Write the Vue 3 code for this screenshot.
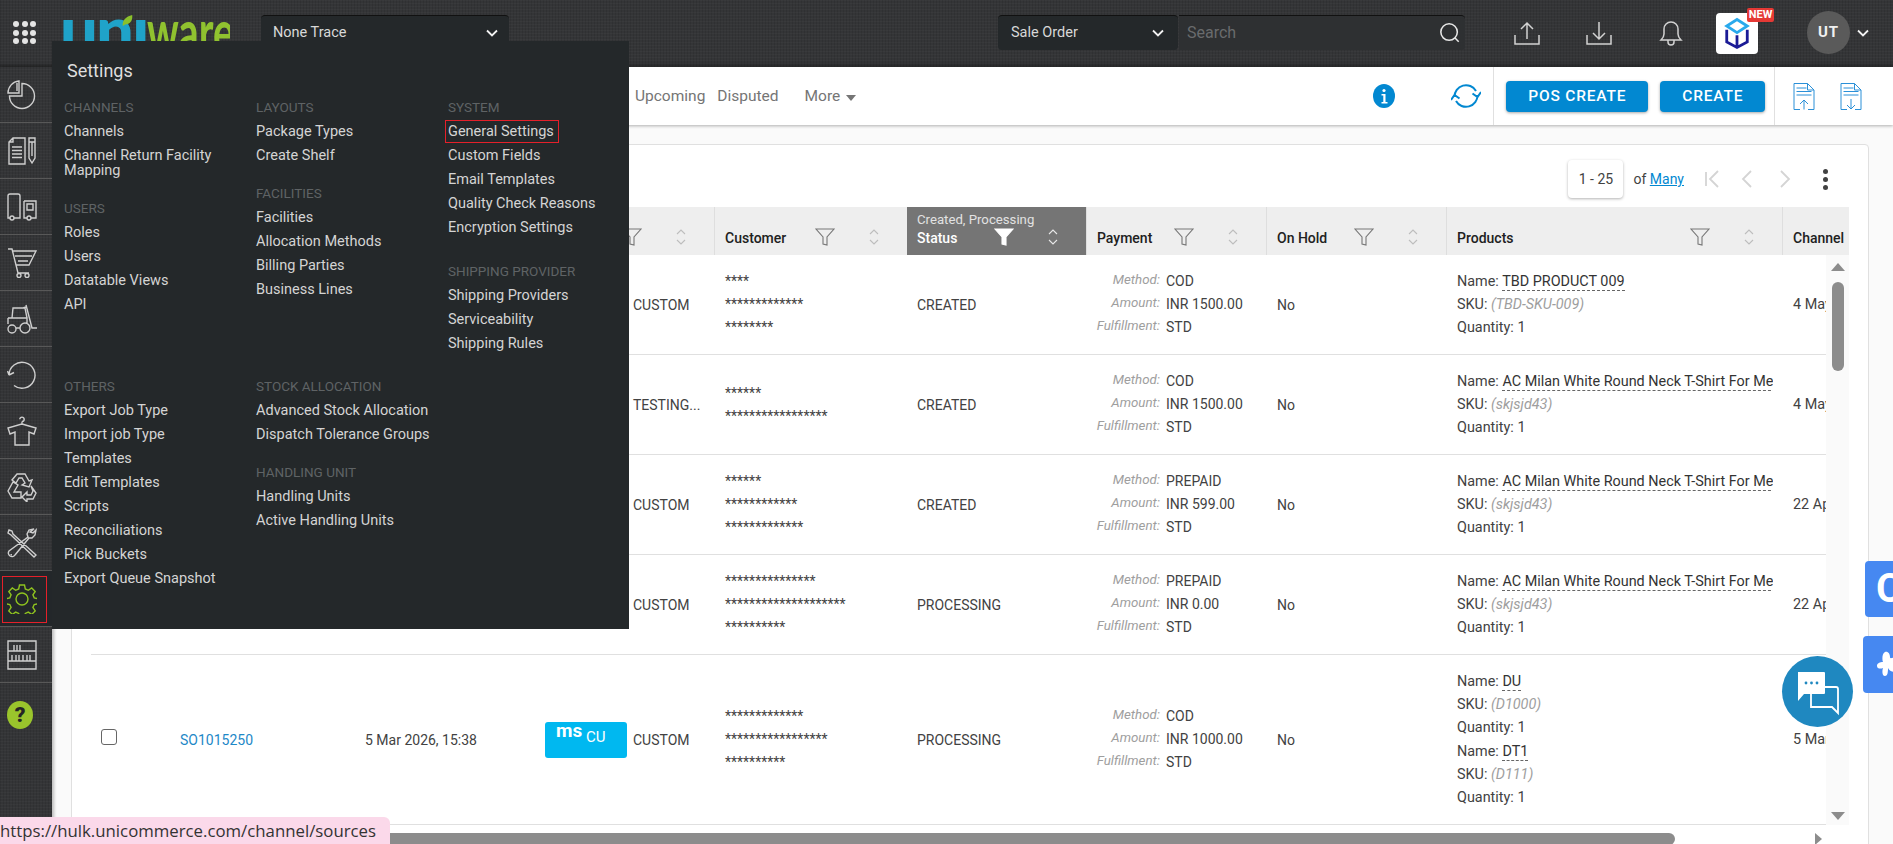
<template>
  <div class="app">
    <header class="topbar">
      <div class="grid-dots"><i v-for="n in 9" :key="n"></i></div>
      <div class="logo">
        <span class="logo-uni">unı</span><span class="logo-ware">ware</span>
        <svg class="logo-leaf" viewBox="0 0 14 16"><path d="M1 15C0 8 5 3 13 1c1 7-3 12-9 12z" fill="#8bc02c"/></svg>
      </div>
      <div class="select select--trace">
        <span>None Trace</span>
        <svg class="chev" viewBox="0 0 12 8"><path d="M1 1.500l5 5 5-5" /></svg>
      </div>
      <div class="search-group">
        <div class="select select--type">
          <span>Sale Order</span>
          <svg class="chev" viewBox="0 0 12 8"><path d="M1 1.500l5 5 5-5" /></svg>
        </div>
        <div class="search">
          <span>Search</span>
          <svg viewBox="0 0 24 24"><circle cx="11" cy="11" r="9"/><path d="M17.500 17.500l4 4"/></svg>
        </div>
      </div>
      <svg class="top-icon top-icon--up" viewBox="0 0 26 24"><path d="M1 14v9h24v-9M13 18V2M7 8l6-6 6 6"/></svg>
      <svg class="top-icon top-icon--down" viewBox="0 0 26 24"><path d="M1 14v9h24v-9M13 1v17M7 12l6 6 6-6"/></svg>
      <svg class="top-icon top-icon--bell" viewBox="0 0 24 26"><path d="M2 20c2-2 3-3 3-6V9a7 7 0 0 1 14 0v5c0 3 1 4 3 6zM9 20v2a3 3 0 0 0 6 0v-2"/></svg>
      <div class="new-app">
        <svg viewBox="0 0 30 34">
          <path d="M15 2L4 9l11 7 11-7z" fill="none" stroke="#29a9ec" stroke-width="3"/>
          <path d="M4 13v13l11 6 11-6V13M15 19v13" fill="none" stroke="#1b1b96" stroke-width="3"/>
        </svg>
        <span class="new-badge">NEW</span>
      </div>
      <div class="avatar">UT</div>
      <svg class="chev chev--user" viewBox="0 0 12 8"><path d="M1 1.500l5 5 5-5" /></svg>
    </header>

    <div class="main">
      <nav class="sidebar">
        <div v-for="item in navItems" :key="item.name" class="nav-cell" :class="{ 'nav-cell--active': item.active }">
          <svg class="nav-icon" viewBox="0 0 30 30"><path :d="item.d"/></svg>
        </div>
        <div class="nav-cell nav-cell--help">
          <span class="help">?</span>
        </div>
      </nav>

      <div class="content">
        <div class="toolbar">
          <span class="tab">Upcoming</span>
          <span class="tab">Disputed</span>
          <span class="tab tab--more">More<i class="caret"></i></span>
          <svg class="info" viewBox="0 0 22 24"><ellipse cx="11" cy="12" rx="11" ry="12" fill="#0288d1"/><circle cx="11" cy="6.500" r="1.600" fill="#fff"/><path d="M8.500 10h4v8h2v1.500h-6V18h1.800v-6.500H8.500z" fill="#fff"/></svg>
          <svg class="refresh" viewBox="0 0 30 28"><path d="M3.500 15A11.500 11.500 0 0 1 25 9M26.500 13A11.500 11.500 0 0 1 5 19M21.500 11.500l5 3.500 3.500-5M8.500 16.500l-5-3.500L0 18"/></svg>
          <div class="toolbar-actions">
            <button class="btn btn--pos">POS CREATE</button>
            <button class="btn btn--create">CREATE</button>
          </div>
          <div class="toolbar-docs">
            <svg class="doc-icon" viewBox="0 0 22 27"><path d="M7 26.500H1V.500h13.500L21 7v19.500h-6M14.500.500V7H21M3.500 5h10M3.500 8.500h15M3.500 12h15M11 26.500V17M7 21l4-4 4 4"/></svg>
            <svg class="doc-icon" viewBox="0 0 22 27"><path d="M7 26.500H1V.500h13.500L21 7v19.500h-6M14.500.500V7H21M3.500 5h10M3.500 8.500h15M3.500 12h15M11 16v10M7 22l4 4 4-4"/></svg>
          </div>
        </div>

        <section class="card">
          <div class="pager">
            <span class="pager-range">1 - 25</span>
            <span class="pager-of">of <a>Many</a></span>
            <svg class="pager-icon" viewBox="0 0 16 20"><path d="M2 3v14M14 2l-8 8 8 8"/></svg>
            <svg class="pager-icon" viewBox="0 0 16 20"><path d="M11 2l-8 8 8 8"/></svg>
            <svg class="pager-icon" viewBox="0 0 16 20"><path d="M5 2l8 8-8 8"/></svg>
            <span class="kebab"><i></i><i></i><i></i></span>
          </div>

          <div class="thead">
            <div class="th" style="width: 80px"></div>
            <div class="th" style="width: 184px"></div>
            <div class="th" style="width: 179px"></div>
            <div v-for="(col, i) in columns" :key="i" class="th th--label" :class="{ 'th--active': col.active }" :style="{ width: col.width + 'px' }">
              <div class="th-text">
                <small v-if="col.active">Created, Processing</small>
                <span>{{ col.label }}</span>
              </div>
              <svg class="filter" viewBox="0 0 20 18"><path d="M1 1h18l-7 8v8l-4-1V9z"/></svg>
              <svg class="sort" viewBox="0 0 10 18"><path d="M1 6l4-4 4 4M1 12l4 4 4-4"/></svg>
            </div>
            <div class="th th--label th--last"><div class="th-text"><span>Channel</span></div></div>
          </div>

          <div class="tbody-wrap">
            <div class="tbody">
              <div v-for="row in rows" :key="row.id" class="tr" :style="{ height: row.height + 'px' }">
                <div class="td td--check"><span v-if="row.code" class="checkbox"></span></div>
                <div class="td td--code"><a v-if="row.code">{{ row.code }}</a></div>
                <div class="td td--date">{{ row.created }}</div>
                <div class="td td--channel">
                  <span v-if="row.code" class="ms-logo"><b>ms</b><em>CU</em></span>
                  <span class="channel-name">{{ row.channel }}</span>
                </div>
                <div class="td td--customer">
                  <div v-for="(line, i) in row.customer" :key="i">{{ line }}</div>
                </div>
                <div class="td td--status">{{ row.status }}</div>
                <div class="td td--payment">
                  <div class="pay"><label>Method:</label><span>{{ row.method }}</span></div>
                  <div class="pay"><label>Amount:</label><span>{{ row.amount }}</span></div>
                  <div class="pay"><label>Fulfillment:</label><span>{{ row.fulfillment }}</span></div>
                </div>
                <div class="td td--hold">No</div>
                <div class="td td--products">
                  <div v-for="p in row.products" :key="p.sku" class="product">
                    <div class="product-name">Name: <span>{{ p.name }}</span></div>
                    <div>SKU: <em>({{ p.sku }})</em></div>
                    <div>Quantity: 1</div>
                  </div>
                </div>
                <div class="td td--last">{{ row.channelDate }}</div>
              </div>
            </div>
            <div class="vscroll">
              <i class="arrow arrow--up"></i>
              <div class="vthumb"></div>
              <i class="arrow arrow--down"></i>
            </div>
          </div>
          <div class="hscroll">
            <div class="hthumb"></div>
            <i class="arrow arrow--right"></i>
          </div>
        </section>
      </div>
    </div>

    <!-- settings flyout -->
    <div class="flyout">
      <h2>Settings</h2>
      <div class="flyout-grid">
        <div v-for="(col, c) in menu" :key="c" class="flyout-col">
          <div v-for="group in col" :key="group.title" class="group" :class="{ 'group--loose': group.loose }">
            <h3>{{ group.title }}</h3>
            <a v-for="link in group.links" :key="link" class="link" :class="{ 'link--active': link === 'General Settings' }">{{ link }}</a>
          </div>
        </div>
      </div>
    </div>

    <div class="side-tab side-tab--one"><span>C</span></div>
    <div class="side-tab side-tab--two">
      <svg viewBox="0 0 24 27"><path d="M9 1c3-1 5 2 5 5s4-1 6 1 1 5-2 6c3 1 4 5 1 7s-6-1-7-3c0 3 0 8-3 8s-3-5-2-8c-2 1-6 1-6-2s3-4 6-4C6 9 6 2 9 1z" fill="#fff"/></svg>
    </div>
    <div class="chat">
      <svg viewBox="0 0 44 46">
        <path d="M15 22v15h21l6 6V19a2 2 0 0 0-2-2H22" fill="none" stroke="#fff" stroke-width="1.800"/>
        <path d="M2 2h26a1 1 0 0 1 1 1v20a1 1 0 0 1-1 1H8l-6 7z" fill="#fff"/>
        <g fill="#1f88c0"><circle cx="10" cy="13" r="1.400"/><circle cx="15.500" cy="13" r="1.400"/><circle cx="21" cy="13" r="1.400"/></g>
      </svg>
    </div>
    <div class="status-url">https://hulk.unicommerce.com/channel/sources</div>
  </div>
</template>

<script setup>
const navItems = [
  { name: 'dashboard', d: 'M15 3.500V16H2.500A12.500 12.500 0 1 0 15 3.500zM12 1v12H1A12 12 0 0 1 12 1zM10 3v8' },
  { name: 'orders', d: 'M6 2h12v26H2V6zM6 2v4H2M5 11h10M5 14.500h10M5 18h10M5 21.500h10M22 2h6v20l-3 5-3-5zM22 6h6M25 6v14' },
  { name: 'shipping', d: 'M3 2h8a2 2 0 0 1 2 2v22H7M3 26H1V4a2 2 0 0 1 2-2M3 26a2 2 0 1 0 4 0 2 2 0 1 0-4 0M17 9h12v17h-5M20 26h-3V9M20 26a2 2 0 1 0 4 0 2 2 0 1 0-4 0M20 12h6v6h-6z' },
  { name: 'cart', d: 'M1 1h4l6 24M5.500 3H29l-7 14H9M8 8h17M11 13h10M10 27.500a2 2 0 1 0 4 0 2 2 0 1 0-4 0M18 27.500a2 2 0 1 0 4 0 2 2 0 1 0-4 0M11 25h11' },
  { name: 'forklift', d: 'M5 14l1-10h12l2 10M1 14h19v6M1 14v6M19 1l6 23h5M16 4l3-1M1 25a4 4 0 1 0 8 0 4 4 0 1 0-8 0M13 24a5 5 0 1 0 10 0 5 5 0 1 0-10 0M9 24h4' },
  { name: 'returns', d: 'M2 15A13 13 0 1 1 7 25.500M2 15l-1.500-4M2 15l5-2.500' },
  { name: 'products', d: 'M15 5.500a2.200 2.200 0 1 0-2.200-2.200M15 5.500V8L1 12l2 6 5-2v13h14V16l5 2 2-6-14-4' },
  { name: 'recycle', d: 'M10 2h8l4 7 3-1-3 7-7-2 3-2-3-5h-3l-3 5-4-3zM1 19l5-9 5 3-4 7h7v6H5zM24 14l5 7-3 6h-6v3l-5-5 5-5v3h4l2-4z' },
  { name: 'tools', d: 'M2 2l3 1 1 3 23 21-2 2L4 7 1 5zM27 1l-5 1-2 4 1 3L2 23a3.500 3.500 0 0 0 1 5 3.500 3.500 0 0 0 5-1l14-17h3l3-3 1-5-3 3-3-1zM4 26a1 1 0 0 0 1 1' },
  { name: 'settings', active: true, d: 'M12.500 1h5l.8 4 3 1.300 3.400-2.300 3.500 3.500-2.300 3.400 1.300 3 4 .8v5l-4 .8-1.300 3 2.300 3.400-3.500 3.500-3.400-2.300-3 1.300-.8 4h-5l-.8-4-3-1.300-3.400 2.300-3.500-3.500 2.300-3.400-1.300-3-4-.8v-5l4-.8 1.300-3-2.300-3.400 3.500-3.500 3.400 2.300 3-1.300zM15 9a6 6 0 1 0 0 12 6 6 0 1 0 0-12z' },
  { name: 'shelves', d: 'M1 1h28v28H1zM1 11h28M1 21h28M7 5v6M10 5v6M13 5v6M5 15v6M9 15v6M12 15v6M16 15v6M20 15v6M23 15v6' }
]

const columns = [
  { label: '', width: 180 },
  { label: 'Customer', width: 193 },
  { label: 'Status', width: 179, active: true },
  { label: 'Payment', width: 180 },
  { label: 'On Hold', width: 180 },
  { label: 'Products', width: 336 }
]

const acMilan = { name: 'AC Milan White Round Neck T-Shirt For Men', sku: 'skjsjd43' }

const rows = [
  {
    id: 1, height: 100, channel: 'CUSTOM', status: 'CREATED',
    customer: ['****', '*************', '********'],
    method: 'COD', amount: 'INR 1500.00', fulfillment: 'STD',
    products: [{ name: 'TBD PRODUCT 009', sku: 'TBD-SKU-009' }], channelDate: '4 May 2026'
  },
  {
    id: 2, height: 100, channel: 'TESTING...', status: 'CREATED',
    customer: ['******', '*****************'],
    method: 'COD', amount: 'INR 1500.00', fulfillment: 'STD',
    products: [acMilan], channelDate: '4 May 2026'
  },
  {
    id: 3, height: 100, channel: 'CUSTOM', status: 'CREATED',
    customer: ['******', '************', '*************'],
    method: 'PREPAID', amount: 'INR 599.00', fulfillment: 'STD',
    products: [acMilan], channelDate: '22 Apr 2026'
  },
  {
    id: 4, height: 100, channel: 'CUSTOM', status: 'PROCESSING',
    customer: ['***************', '********************', '**********'],
    method: 'PREPAID', amount: 'INR 0.00', fulfillment: 'STD',
    products: [acMilan], channelDate: '22 Apr 2026'
  },
  {
    id: 5, height: 170, code: 'SO1015250', created: '5 Mar 2026, 15:38', channel: 'CUSTOM', status: 'PROCESSING',
    customer: ['*************', '*****************', '**********'],
    method: 'COD', amount: 'INR 1000.00', fulfillment: 'STD',
    products: [{ name: 'DU', sku: 'D1000' }, { name: 'DT1', sku: 'D111' }], channelDate: '5 Mar 2026'
  }
]

const menu = [
  [
    { title: 'CHANNELS', links: ['Channels', 'Channel Return Facility Mapping'] },
    { title: 'USERS', links: ['Roles', 'Users', 'Datatable Views', 'API'] }
  ],
  [
    { title: 'LAYOUTS', links: ['Package Types', 'Create Shelf'] },
    { title: 'FACILITIES', links: ['Facilities', 'Allocation Methods', 'Billing Parties', 'Business Lines'] }
  ],
  [
    { title: 'SYSTEM', links: ['General Settings', 'Custom Fields', 'Email Templates', 'Quality Check Reasons', 'Encryption Settings'] },
    { title: 'SHIPPING PROVIDER', loose: true, links: ['Shipping Providers', 'Serviceability', 'Shipping Rules'] }
  ],
  [
    { title: 'OTHERS', links: ['Export Job Type', 'Import job Type', 'Templates', 'Edit Templates', 'Scripts', 'Reconciliations', 'Pick Buckets', 'Export Queue Snapshot'] }
  ],
  [
    { title: 'STOCK ALLOCATION', links: ['Advanced Stock Allocation', 'Dispatch Tolerance Groups'] },
    { title: 'HANDLING UNIT', links: ['Handling Units', 'Active Handling Units'] }
  ]
]
</script>

<style>
html, body {
  margin: 0;
  overflow: hidden;
}
</style>

<style scoped>
.app {
  position: relative;
  display: flex;
  flex-direction: column;
  width: 1893px;
  height: 844px;
  overflow: hidden;
  font-family: Roboto, "Liberation Sans", sans-serif;
  font-size: 14px;
  color: #424242;
  background: #fafafa;
}

/* dark woven texture shared by the top bar and the side rail */
.topbar,
.sidebar {
  background-color: #343537;
  background-image:
    repeating-linear-gradient(0deg, rgba(255, 255, 255, 0.025) 0 1px, transparent 1px 3px),
    repeating-linear-gradient(90deg, rgba(0, 0, 0, 0.09) 0 1px, transparent 1px 3px);
}

.topbar {
  position: relative;
  flex: 0 0 67px;
  display: flex;
  align-items: flex-start;
  box-shadow: inset 0 -5px 5px -4px rgba(0, 0, 0, 0.45);
}

.grid-dots {
  display: grid;
  grid-template-columns: repeat(3, 6px);
  gap: 2.500px;
  margin: 21px 0 0 13px;
}
.grid-dots i {
  width: 6px;
  height: 6px;
  border-radius: 50%;
  background: #e4e4e4;
}

.logo {
  position: relative;
  flex: none;
  width: 170px;
  margin: 0 31px 0 24px;
  height: 60px;
  line-height: 56px;
  font-family: Lato, "Open Sans", sans-serif;
  white-space: nowrap;
  overflow: hidden;
}
.logo-uni {
  color: #1fa3c9;
  font-size: 67px;
  font-weight: 900;
  letter-spacing: -2px;
}
.logo-ware {
  display: inline-block;
  color: #90c22f;
  font-size: 62px;
  font-weight: 700;
  transform: scaleX(0.64);
  transform-origin: left center;
}
.logo-leaf {
  position: absolute;
  left: 62px;
  top: 14px;
  width: 11px;
  height: 13px;
}

.select {
  display: flex;
  align-items: center;
  justify-content: space-between;
  height: 35px;
  box-sizing: border-box;
  margin-top: 15px;
  background: #24282a;
  border-top: 1px solid #111;
  border-radius: 4px;
  color: #d8d8d8;
  font-size: 14.500px;
}
.select--trace {
  width: 248px;
  padding: 0 11px 1px 12px;
}
.select--type {
  width: 180px;
  margin: 0;
  padding: 0 14px 1px 13px;
}
.chev {
  width: 12px;
  height: 8px;
  fill: none;
  stroke: #f2f2f2;
  stroke-width: 1.800;
}

.search-group {
  display: flex;
  margin: 15px 0 0 489px;
}
.search {
  display: flex;
  align-items: center;
  justify-content: space-between;
  width: 286px;
  height: 35px;
  margin-left: 1px;
  padding: 0 4px 1px 8px;
  box-sizing: border-box;
  background: #2e3032;
  border-top: 1px solid #111;
  border-radius: 0 4px 4px 0;
  color: #696b6d;
  font-size: 16px;
}
.search svg {
  width: 22px;
  height: 22px;
  fill: none;
  stroke: #e6e6e6;
  stroke-width: 1.700;
}

.top-icon {
  fill: none;
  stroke: #d2d2d2;
  stroke-width: 1.500;
  margin-top: 21px;
}
.top-icon--up,
.top-icon--down {
  width: 26px;
  height: 24px;
}
.top-icon--up {
  margin-left: 49px;
}
.top-icon--down {
  margin-left: 46px;
}
.top-icon--bell {
  width: 24px;
  height: 26px;
  margin-top: 20px;
  margin-left: 47px;
}

.new-app {
  position: relative;
  display: flex;
  align-items: center;
  justify-content: center;
  width: 42px;
  height: 41px;
  margin: 13px 0 0 33px;
  background: #fff;
  border-radius: 4px;
}
.new-app svg {
  width: 28px;
  height: 33px;
}
.new-badge {
  position: absolute;
  top: -5px;
  left: 31px;
  width: 27px;
  height: 14px;
  background: #e53935;
  border-radius: 2px;
  color: #fff;
  font-size: 11px;
  font-weight: 700;
  line-height: 14px;
  text-align: center;
}

.avatar {
  width: 43px;
  height: 43px;
  margin: 11px 0 0 49px;
  border-radius: 50%;
  background: #5a5a5a;
  color: #f0f0f0;
  font-size: 15px;
  font-weight: 700;
  letter-spacing: 1px;
  line-height: 43px;
  text-align: center;
}
.chev--user {
  margin: 29px 0 0 7px;
}

.main {
  flex: 1;
  display: flex;
  min-height: 0;
}

.sidebar {
  flex: 0 0 52px;
  box-shadow: 2px 0 3px rgba(0, 0, 0, 0.25);
  z-index: 1;
}
.nav-cell {
  position: relative;
  display: flex;
  align-items: center;
  height: 56px;
  box-sizing: border-box;
  padding: 0 0 0 7px;
  border-bottom: 1px solid #585858;
}
.nav-cell--help {
  border-bottom: 0;
}
.nav-icon {
  width: 30px;
  height: 30px;
  fill: none;
  stroke: #cfcfcf;
  stroke-width: 1.400;
}
.nav-cell--active {
  background: #23272a;
}
.nav-cell--active::after {
  content: "";
  position: absolute;
  top: 5px;
  left: 2px;
  width: 45px;
  height: 47px;
  box-sizing: border-box;
  border: 1px solid #e5202a;
}
.nav-cell--active .nav-icon {
  stroke: #8fc31f;
}
.help {
  width: 26px;
  height: 28px;
  border-radius: 50%;
  margin-top: 8px;
  background: #9ac52c;
  color: #252525;
  font-size: 21px;
  font-weight: 900;
  line-height: 28px;
  text-align: center;
}

.content {
  flex: 1;
  min-width: 0;
}

.toolbar {
  display: flex;
  align-items: center;
  height: 58px;
  box-sizing: border-box;
  padding-left: 583px;
  background: #fff;
  box-shadow: 0 1px 3px rgba(0, 0, 0, 0.3);
  color: #757575;
  font-size: 15.500px;
}
.tab {
  margin-right: 12px;
}
.tab--more {
  display: flex;
  align-items: center;
  margin-left: 14px;
}
.caret {
  margin: 3px 0 0 6px;
  border: 5px solid transparent;
  border-top: 6px solid #757575;
  border-bottom: 0;
}
.info {
  width: 22px;
  height: 24px;
  margin-left: 505px;
}
.refresh {
  width: 30px;
  height: 28px;
  margin-left: 56px;
  fill: none;
  stroke: #0288d1;
  stroke-width: 2;
}
.toolbar-actions {
  display: flex;
  align-self: stretch;
  align-items: center;
  gap: 12px;
  margin-left: 12px;
  padding: 0 9px 0 12px;
  border-left: 1px solid #e0e0e0;
  border-right: 1px solid #e0e0e0;
}
.btn {
  height: 31px;
  padding: 0;
  border: 0;
  border-radius: 4px;
  background: #0288d1;
  box-shadow: 0 1px 3px rgba(0, 0, 0, 0.35);
  color: #fff;
  font-family: inherit;
  font-size: 15.500px;
  font-weight: 500;
  letter-spacing: 0.800px;
}
.btn--pos {
  width: 142px;
}
.btn--create {
  width: 105px;
}
.toolbar-docs {
  display: flex;
  gap: 25px;
  padding-left: 18px;
}
.doc-icon {
  width: 22px;
  height: 27px;
  fill: none;
  stroke: #2a90d8;
  stroke-width: 1;
}

.card {
  height: 720px;
  box-sizing: border-box;
  margin: 19px 24px 0 19px;
  padding: 0 19px;
  background: #fff;
  border: 1px solid #e0e0e0;
  border-radius: 4px;
}

.pager {
  display: flex;
  align-items: center;
  justify-content: flex-end;
  height: 62px;
  padding: 6px 20px 0 0;
  box-sizing: border-box;
}
.pager-range {
  width: 55px;
  height: 38px;
  background: #fff;
  border-radius: 4px;
  box-shadow: 0 1px 3px rgba(0, 0, 0, 0.3);
  color: #424242;
  line-height: 38px;
  text-align: center;
}
.pager-of {
  margin: 0 20px 0 10px;
  color: #424242;
}
.pager-of a {
  color: #0288d1;
  text-decoration: underline;
}
.pager-icon {
  width: 16px;
  height: 20px;
  margin-right: 20px;
  fill: none;
  stroke: #d4d4d4;
  stroke-width: 1.800;
}
.kebab {
  display: flex;
  flex-direction: column;
  gap: 3px;
  width: 6px;
  margin-left: 11px;
}
.kebab i {
  width: 5px;
  height: 5px;
  border-radius: 50%;
  background: #424242;
}

.thead {
  display: flex;
  height: 48px;
  width: 1758px;
  overflow: hidden;
  background: #eee;
}
.th {
  flex: none;
  box-sizing: border-box;
}
.th--label {
  display: flex;
  align-items: flex-end;
  padding: 0 28px 9px 10px;
  border-left: 1px solid #dedede;
  color: #212121;
  font-weight: 500;
  white-space: nowrap;
}
.th-text {
  flex: 1;
  min-width: 0;
  display: flex;
  flex-direction: column;
}
.th-text small {
  margin-bottom: 3px;
  color: #e2e2e2;
  font-size: 13.200px;
  font-weight: 400;
}
.filter {
  flex: none;
  width: 20px;
  height: 18px;
  fill: none;
  stroke: #777;
  stroke-width: 1.100;
}
.sort {
  flex: none;
  width: 10px;
  height: 18px;
  margin-left: 34px;
  fill: none;
  stroke: #bdbdbd;
  stroke-width: 1.100;
}
.th--active {
  background: #757575;
  color: #fff;
  border-left: 0;
}
.th--active .filter {
  fill: #fff;
  stroke: #fff;
}
.th--active .sort {
  stroke: #e8e8e8;
}
.th--last {
  flex: 1;
  padding-right: 0;
}

.tbody-wrap {
  display: flex;
  height: 570px;
}
.tbody {
  flex: 1;
  min-width: 0;
  overflow: hidden;
}
.tr {
  display: flex;
  align-items: center;
  box-sizing: border-box;
  width: 1900px;
  border-bottom: 1px solid #e0e0e0;
}
.td {
  flex: none;
  box-sizing: border-box;
  padding-left: 11px;
}
.td--check {
  width: 80px;
  padding-left: 10px;
}
.checkbox {
  display: block;
  width: 16px;
  height: 16px;
  margin-top: -6px;
  box-sizing: border-box;
  border: 1px solid #666;
  border-radius: 3px;
}
.td--code {
  width: 184px;
  padding-left: 9px;
}
.td--code a {
  color: #1e88c7;
}
.td--date {
  width: 179px;
  padding-left: 10px;
}
.td--channel {
  display: flex;
  align-items: center;
  width: 180px;
  padding-left: 0;
}
.ms-logo {
  position: relative;
  width: 82px;
  height: 36px;
  margin-left: 11px;
  margin-right: 6px;
  background: #00b8f0;
  border-radius: 3px;
  color: #fff;
}
.ms-logo b {
  position: absolute;
  left: 11px;
  top: -1px;
  font-size: 19px;
  line-height: 20px;
}
.ms-logo em {
  position: absolute;
  left: 41px;
  top: 6px;
  font-size: 15px;
  font-style: normal;
  line-height: 18px;
}
.channel-name {
  margin-left: 99px;
}
.ms-logo + .channel-name {
  margin-left: 0;
}
.td--customer {
  width: 193px;
  line-height: 23px;
}
.td--status {
  width: 179px;
  padding-left: 10px;
}
.td--payment {
  width: 180px;
  padding-left: 10px;
  line-height: 23px;
}
.pay {
  display: flex;
  gap: 6px;
}
.pay label {
  flex: none;
  width: 64px;
  margin-top: -2px;
  color: #9e9e9e;
  font-size: 13.300px;
  font-style: italic;
  text-align: right;
  white-space: nowrap;
}
.td--hold {
  width: 180px;
}
.td--products {
  width: 327px;
  margin-right: 9px;
  font-size: 14.400px;
  line-height: 23px;
  white-space: nowrap;
  overflow: hidden;
}
.product + .product {
  margin-top: 1px;
}
.product-name span {
  border-bottom: 1px dashed #666;
  color: #333;
}
.td--products em {
  color: #9e9e9e;
}
.td--last {
  font-size: 14.400px;
  white-space: nowrap;
}

.vscroll {
  flex: 0 0 23px;
  display: flex;
  flex-direction: column;
  align-items: center;
  box-sizing: border-box;
  padding: 8px 0 5px;
  background: #fafafa;
}
.vthumb {
  width: 12px;
  height: 89px;
  margin-top: 11px;
  background: #8c8c8c;
  border-radius: 6px;
}
.arrow {
  display: block;
  border: 7px solid transparent;
  border-top: 0;
  border-bottom: 8px solid #8c8c8c;
}
.arrow--down {
  margin-top: auto;
  border-bottom: 0;
  border-top: 8px solid #8c8c8c;
}
.arrow--right {
  border: 6px solid transparent;
  border-right: 0;
  border-left: 7px solid #8c8c8c;
  margin-left: 140px;
}

.hscroll {
  display: flex;
  align-items: center;
  height: 11px;
  margin-top: 8px;
}
.hthumb {
  width: 1584px;
  height: 12px;
  background: #8c8c8c;
  border-radius: 6px;
}

/* settings flyout sits over the page */
.flyout {
  position: absolute;
  top: 41px;
  left: 52px;
  width: 577px;
  height: 588px;
  box-sizing: border-box;
  padding: 0 0 0 12px;
  background: #24282a;
  color: #d4d4d4;
  z-index: 5;
}
.flyout h2 {
  margin: 0 0 13px 3px;
  padding-top: 18px;
  font-size: 18px;
  font-weight: 400;
  line-height: 24px;
  color: #dedede;
}
.flyout-grid {
  display: grid;
  grid-template-columns: repeat(3, 192px);
  row-gap: 20px;
}
.group + .group {
  margin-top: 14px;
}
.group.group--loose {
  margin-top: 20px;
}
.group h3 {
  margin: 0;
  padding-bottom: 1.500px;
  color: #5f6365;
  font-size: 13.500px;
  font-weight: 400;
  line-height: 22px;
}
.link {
  display: block;
  width: 180px;
  padding: 4.500px 0;
  font-size: 14.500px;
  line-height: 15px;
}
.link--active {
  width: 114px;
  height: 23px;
  box-sizing: border-box;
  margin: 0 0 1px -3px;
  padding: 3px 0 0 2px;
  border: 1px solid #e5202a;
  white-space: nowrap;
}

.side-tab {
  position: absolute;
  right: 0;
  overflow: hidden;
  background: #4688f1;
  border-radius: 4px 0 0 4px;
  color: #fff;
  z-index: 3;
}
.side-tab--one {
  top: 561px;
  width: 28px;
  height: 56px;
}
.side-tab--one span {
  display: block;
  margin-left: 11px;
  font-size: 40px;
  font-weight: 700;
  line-height: 56px;
}
.side-tab--two {
  top: 636px;
  width: 30px;
  height: 57px;
}
.side-tab--two svg {
  width: 24px;
  height: 27px;
  margin: 15px 0 0 13px;
}

.chat {
  position: absolute;
  top: 656px;
  left: 1782px;
  display: flex;
  align-items: center;
  justify-content: center;
  width: 71px;
  height: 71px;
  border-radius: 50%;
  background: #1f88c0;
  z-index: 4;
}
.chat svg {
  width: 44px;
  height: 46px;
  margin-top: 2px;
}

.status-url {
  position: absolute;
  left: 0;
  bottom: 0;
  width: 390px;
  height: 27px;
  box-sizing: border-box;
  padding-top: 1px;
  background: #fbd9ea;
  border-radius: 0 6px 0 0;
  color: #333;
  font-family: "Open Sans", sans-serif;
  font-size: 16.800px;
  line-height: 26px;
  white-space: nowrap;
  z-index: 6;
}
</style>
